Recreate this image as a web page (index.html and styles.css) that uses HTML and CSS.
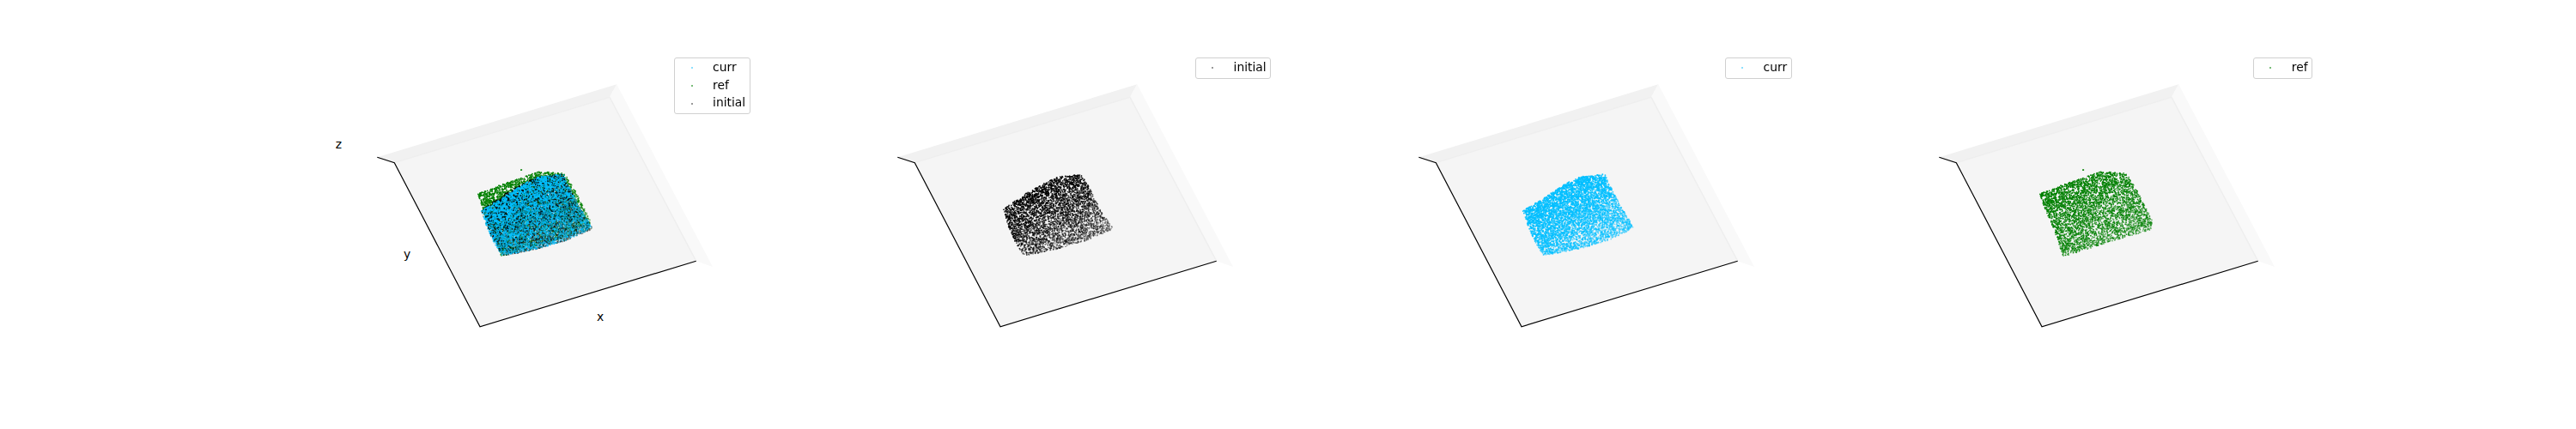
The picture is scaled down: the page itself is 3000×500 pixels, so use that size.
FILE: index.html
```html
<!DOCTYPE html>
<html lang="en">
<head>
<meta charset="utf-8">
<title>Point clouds</title>
<link rel="stylesheet" href="styles.css">
</head>
<body>
<svg class="defs" width="0" height="0" aria-hidden="true">
  <defs>
    <g id="box">
      <polygon class="wall-back" points="64.3,183.3 343.3,98.3 335,113.3 84.3,189.7"/>
      <polygon class="wall-right" points="343.3,98.3 455,311 435.7,304.3 335,113.3"/>
      <polygon class="floor" points="84.3,189.7 335,113.3 435.7,304.3 184,380.7"/>
      <polyline class="seam" points="84.3,189.7 335,113.3 435.7,304.3"/>
      <polyline class="axis" points="64.3,183.3 84.3,189.7 184,380.7 435.7,304.3"/>
    </g>
  </defs>
</svg>
<main class="figure">
  <section class="panel">
    <svg class="plot"><use href="#box"/>
      <text class="axis-label" x="19.3" y="173">z</text>
      <text class="axis-label" x="99" y="301">y</text>
      <text class="axis-label" x="324" y="374">x</text>
    </svg>
    <canvas class="cloud" width="506" height="500" data-clouds="ref initial curr fleck speck"></canvas>
    <div class="legend">
      <div class="entry"><i class="dot curr"></i><span>curr</span></div>
      <div class="entry"><i class="dot ref"></i><span>ref</span></div>
      <div class="entry"><i class="dot initial"></i><span>initial</span></div>
    </div>
  </section>
  <section class="panel">
    <svg class="plot"><use href="#box"/></svg>
    <canvas class="cloud" width="506" height="500" data-clouds="initial"></canvas>
    <div class="legend">
      <div class="entry"><i class="dot initial"></i><span>initial</span></div>
    </div>
  </section>
  <section class="panel">
    <svg class="plot"><use href="#box"/></svg>
    <canvas class="cloud" width="506" height="500" data-clouds="curr"></canvas>
    <div class="legend">
      <div class="entry"><i class="dot curr"></i><span>curr</span></div>
    </div>
  </section>
  <section class="panel">
    <svg class="plot"><use href="#box"/></svg>
    <canvas class="cloud" width="506" height="500" data-clouds="ref"></canvas>
    <div class="legend">
      <div class="entry"><i class="dot ref"></i><span>ref</span></div>
    </div>
  </section>
</main>
<script src="script.js"></script>
</body>
</html>
```
FILE: styles.css
```css
html, body {
  margin: 0;
  background: #fff;
}
body {
  overflow: hidden;
  font-family: "DejaVu Sans", sans-serif;
  color: #000;
}
.defs {
  position: absolute;
}
.figure {
  display: flex;
  gap: 101.1px;
  height: 500px;
  padding-left: 375px;
}
.panel {
  position: relative;
  flex: 0 0 505.4px;
  height: 500px;
}
.plot {
  display: block;
  width: 505.4px;
  height: 500px;
  overflow: visible;
}
.cloud {
  position: absolute;
  left: 0;
  top: 0;
}
.wall-back { fill: #f1f1f1; }
.wall-right { fill: #f9f9f9; }
.floor { fill: #f5f5f5; }
.seam {
  fill: none;
  stroke: #eeeeee;
  stroke-width: 1.4;
}
.axis {
  fill: none;
  stroke: #000;
  stroke-width: 1.2;
}
.axis-label {
  font-size: 13.89px;
  text-anchor: middle;
  fill: #000;
}
.legend {
  position: absolute;
  top: 67px;
  right: 6.6px;
  display: flex;
  flex-direction: column;
  gap: 4.4px;
  padding: 2.3px 4.6px 4.2px 0;
  background: rgba(255, 255, 255, 0.8);
  border: 1px solid #d0d0d0;
  border-radius: 3px;
}
.entry {
  display: flex;
  align-items: center;
  height: 16.2px;
  font-size: 13.89px;
  line-height: 16.2px;
  white-space: nowrap;
}
.dot {
  flex: none;
  width: 2px;
  height: 2px;
  margin: 2px 23.5px 0 18.5px;
  border-radius: 50%;
}
.dot.curr { background: #66d6ff; }
.dot.ref { background: #4da64d; }
.dot.initial { background: #777; }
```
FILE: script.js
```js
(function () {
  var TOP = 50;
  var INITIAL_POLY = [[187.5,193.3],[211.8,176.7],[235.2,163.3],[251.8,156],[278.5,153.3],[288.5,170],[301.8,196.7],[315.8,216.7],[285.2,230],[251.8,240],[211.8,248.3],[201.8,233.3],[191.8,210]];
  var CURR_POLY = [[185.3,196],[208.7,181.7],[232,166],[252,156],[281,153],[292,176.7],[315.3,216],[285.3,230],[252,240],[209.7,248.3],[198.7,230],[190.3,210]];
  var DEFS = {
    curr: {
      rgb: "0,191,255", n: 5000, r: 0.95, seed: 11, lo: 0.3, bias: 0.4, poly: CURR_POLY
    },
    ref: {
      rgb: "0,128,0", n: 4300, r: 0.85, seed: 23, lo: 0.45, bias: 0.15,
      poly: [[181.2,175.7],[212.2,164],[252.2,150],[282.2,151.7],[295.5,173.3],[312.8,207.3],[310.5,218.3],[268.8,230],[208.8,249.3],[198.8,220],[188.8,196.7]],
      extra: [[231.8,148]]
    },
    initial: {
      rgb: "0,0,0", n: 4200, r: 0.85, seed: 37, lo: 0.22, bias: 0.3, poly: INITIAL_POLY
    },
    speck: {
      rgb: "0,0,0", n: 420, r: 0.85, seed: 53, lo: 0.3, bias: 0, poly: CURR_POLY
    },
    fleck: {
      rgb: "0,90,40", n: 900, r: 0.8, seed: 71, lo: 0.25, hi: 0.55, bias: -1, poly: CURR_POLY
    }
  };

  function rng(seed) {
    var s = seed >>> 0;
    return function () {
      s = (s + 0x6D2B79F5) >>> 0;
      var t = s;
      t = Math.imul(t ^ (t >>> 15), t | 1);
      t ^= t + Math.imul(t ^ (t >>> 7), t | 61);
      return ((t ^ (t >>> 14)) >>> 0) / 4294967296;
    };
  }

  function inside(p, x, y) {
    var c = false;
    for (var i = 0, j = p.length - 1; i < p.length; j = i++) {
      if ((p[i][1] > y) !== (p[j][1] > y) &&
          x < (p[j][0] - p[i][0]) * (y - p[i][1]) / (p[j][1] - p[i][1]) + p[i][0]) {
        c = !c;
      }
    }
    return c;
  }

  function draw(ctx, d) {
    var rand = rng(d.seed);
    var hi = d.hi || 1;
    var xs = d.poly.map(function (q) { return q[0]; });
    var ys = d.poly.map(function (q) { return q[1]; });
    var x0 = Math.min.apply(null, xs), x1 = Math.max.apply(null, xs);
    var y0 = Math.min.apply(null, ys), y1 = Math.max.apply(null, ys);
    var count = 0, guard = 0;
    function dot(x, y, a) {
      ctx.fillStyle = "rgba(" + d.rgb + "," + a + ")";
      ctx.beginPath();
      ctx.arc(x, y + TOP, d.r, 0, Math.PI * 2);
      ctx.fill();
    }
    while (count < d.n && guard < d.n * 40) {
      guard++;
      var x = x0 + rand() * (x1 - x0);
      var y = y0 + rand() * (y1 - y0);
      if (!inside(d.poly, x, y)) continue;
      // depth shading and density: strong at the upper left, thin towards the lower right.
      // A negative bias inverts the density, for points that show through near the front.
      var t = ((x - x0) / (x1 - x0) * 0.45) + ((y - y0) / (y1 - y0) * 0.55);
      var skip = d.bias < 0 ? -d.bias * (1 - t) : d.bias * t;
      if (rand() < skip) continue;
      var a = hi - (hi - d.lo) * Math.min(1, Math.max(0, (t - 0.2) / 0.8));
      dot(x, y, a);
      count++;
    }
    (d.extra || []).forEach(function (q) {
      dot(q[0], q[1], 1);
      dot(q[0] + 0.6, q[1], 1);
    });
  }

  document.querySelectorAll(".cloud").forEach(function (cv) {
    var ctx = cv.getContext("2d");
    cv.dataset.clouds.split(" ").forEach(function (name) {
      draw(ctx, DEFS[name]);
    });
  });
})();
```
